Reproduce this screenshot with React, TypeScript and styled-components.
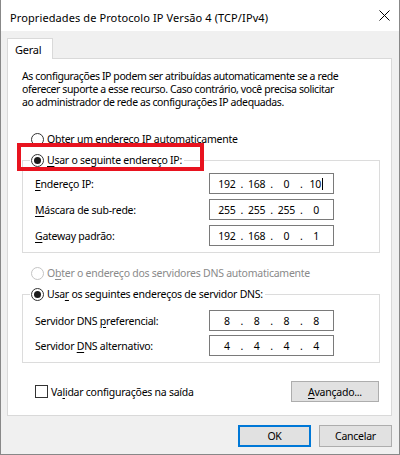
import React from 'react'
import styled, { createGlobalStyle } from 'styled-components'

const FONT = `'Noto Sans', 'Segoe UI', 'Liberation Sans', sans-serif`

const GlobalStyle = createGlobalStyle`
  html, body {
    margin: 0;
    padding: 0;
    background: #ffffff;
  }
  body {
    font-family: ${FONT};
    font-size: 10.5px;
    letter-spacing: -0.25px;
    color: #000000;
  }
  * {
    box-sizing: border-box;
  }
`

type IpProps = {
  parts: string[]
  caret?: boolean
}

const IpBox: React.FC<IpProps> = ({ parts, caret }) => (
  <IpInput>
    {parts.map((part, i) => (
      <React.Fragment key={i}>
        {i > 0 && <Dot>.</Dot>}
        <IpField>
          {part}
          {caret && i === parts.length - 1 && <Caret />}
        </IpField>
      </React.Fragment>
    ))}
  </IpInput>
)

type RadioProps = {
  checked?: boolean
  disabled?: boolean
  children: React.ReactNode
}

const Radio: React.FC<RadioProps> = ({ checked, disabled, children }) => (
  <OptionRow $disabled={disabled}>
    <RadioCircle $disabled={disabled}>{checked && <RadioDot />}</RadioCircle>
    <span>{children}</span>
  </OptionRow>
)

export default function App() {
  return (
    <>
      <GlobalStyle />
      <Window>
        <TitleBar>
          <Title>Propriedades de Protocolo IP Versão 4 (TCP/IPv4)</Title>
          <svg width="11" height="11" viewBox="0 0 11 11">
            <path d="M0.5 0.5 L10.5 10.5 M10.5 0.5 L0.5 10.5" stroke="#000" strokeWidth="1" />
          </svg>
        </TitleBar>

        <Body>
          <TabStrip>
            <Tab>Geral</Tab>
          </TabStrip>

          <Panel>
            <Description>
              As configurações IP podem ser atribuídas automaticamente se a rede
              <br />
              oferecer suporte a esse recurso. Caso contrário, você precisa solicitar
              <br />
              ao administrador de rede as configurações IP adequadas.
            </Description>

            <FirstOption>
              <Radio>
                <Key>O</Key>bter um endereço IP automaticamente
              </Radio>
            </FirstOption>

            <Group $top={5}>
              <Legend>
                <Radio checked>
                  <Key>U</Key>sar o seguinte endereço IP:
                </Radio>
                <Highlight />
              </Legend>
              <Rows $first={5} $gap={5} $bottom={6}>
                <FieldRow>
                  <FieldLabel>
                    <Key>E</Key>ndereço IP:
                  </FieldLabel>
                  <IpBox parts={['192', '168', '0', '10']} caret />
                </FieldRow>
                <FieldRow>
                  <FieldLabel>
                    <Key>M</Key>áscara de sub-rede:
                  </FieldLabel>
                  <IpBox parts={['255', '255', '255', '0']} />
                </FieldRow>
                <FieldRow>
                  <FieldLabel>
                    <Key>G</Key>ateway padrão:
                  </FieldLabel>
                  <IpBox parts={['192', '168', '0', '1']} />
                </FieldRow>
              </Rows>
            </Group>

            <DnsAuto>
              <Radio disabled>
                O<Key>b</Key>ter o endereço dos servidores DNS automaticamente
              </Radio>
            </DnsAuto>

            <Group $top={5}>
              <Legend>
                <Radio checked>
                  Usa<Key>r</Key> os seguintes endereços de servidor DNS:
                </Radio>
              </Legend>
              <Rows $first={8} $gap={4} $bottom={6}>
                <FieldRow>
                  <FieldLabel>
                    Servidor DNS <Key>p</Key>referencial:
                  </FieldLabel>
                  <IpBox parts={['8', '8', '8', '8']} />
                </FieldRow>
                <FieldRow>
                  <FieldLabel>
                    Servidor <Key>D</Key>NS alternativo:
                  </FieldLabel>
                  <IpBox parts={['4', '4', '4', '4']} />
                </FieldRow>
              </Rows>
            </Group>

            <BottomRow>
              <CheckRow>
                <CheckBox />
                <span>
                  Va<Key>l</Key>idar configurações na saída
                </span>
              </CheckRow>
              <Button $width={88}>
                <Key>A</Key>vançado...
              </Button>
            </BottomRow>
          </Panel>

          <Footer>
            <Button $width={73} $height={22} $default>
              OK
            </Button>
            <Button $width={73} $height={22}>
              Cancelar
            </Button>
          </Footer>
        </Body>
      </Window>
    </>
  )
}

const Window = styled.div`
  width: 400px;
  height: 455px;
  display: flex;
  flex-direction: column;
  background: #f0f0f0;
  border: 1px solid #888888;
  border-top: none;
`

const TitleBar = styled.div`
  height: 31px;
  flex: none;
  display: flex;
  align-items: center;
  justify-content: space-between;
  padding: 0 9px 0 9px;
  background: #ffffff;
`

const Title = styled.span`
  font-size: 11px;
  letter-spacing: 0.1px;
  padding-top: 3px;
`

const Body = styled.div`
  flex: 1;
  display: flex;
  flex-direction: column;
  padding: 7px 7px 0 6px;
`

const TabStrip = styled.div`
  display: flex;
`

const Tab = styled.div`
  position: relative;
  z-index: 1;
  width: 46px;
  height: 21px;
  margin-bottom: -1px;
  padding: 3px 0 0 7px;
  font-size: 11px;
  background: #ffffff;
  border: 1px solid #d9d9d9;
  border-bottom: none;
`

const Panel = styled.div`
  height: 358px;
  display: flex;
  flex-direction: column;
  padding: 11px 11px 0 14px;
  background: #ffffff;
  border: 1px solid #d9d9d9;
`

const Description = styled.p`
  margin: 0;
  line-height: 13px;
  letter-spacing: -0.4px;
  white-space: nowrap;
`

const OptionRow = styled.div<{ $disabled?: boolean }>`
  height: 16px;
  display: flex;
  align-items: center;
  gap: 3px;
  color: ${p => (p.$disabled ? '#8a8a8a' : '#000000')};
  white-space: nowrap;
`

const RadioCircle = styled.span<{ $disabled?: boolean }>`
  width: 13px;
  height: 13px;
  flex: none;
  display: flex;
  align-items: center;
  justify-content: center;
  border-radius: 50%;
  background: #ffffff;
  border: 1px solid ${p => (p.$disabled ? '#c4c4c4' : '#333333')};
`

const RadioDot = styled.span`
  width: 7px;
  height: 7px;
  border-radius: 50%;
  background: #1b1b1b;
`

const FirstOption = styled.div`
  margin: 22px 0 0 9px;
`

const DnsAuto = styled.div`
  margin: 12px 0 0 9px;
`

const Group = styled.fieldset<{ $top: number }>`
  width: 358px;
  min-width: 0;
  margin: ${p => p.$top}px 0 0 0;
  padding: 0;
  border: 1px solid #dcdcdc;
`

const Legend = styled.legend`
  position: relative;
  margin-left: 7px;
  padding: 0 2px 0 1px;
`

const Highlight = styled.span`
  position: absolute;
  top: -9px;
  left: -13px;
  width: 187px;
  height: 28px;
  border: 4px solid #e8131f;
  pointer-events: none;
`

const Rows = styled.div<{ $first: number; $gap: number; $bottom: number }>`
  display: flex;
  flex-direction: column;
  gap: ${p => p.$gap}px;
  padding: ${p => p.$first}px 0 ${p => p.$bottom}px 12px;
`

const FieldRow = styled.div`
  display: flex;
  align-items: center;
`

const FieldLabel = styled.span`
  width: 174px;
  white-space: nowrap;
`

const IpInput = styled.div`
  width: 125px;
  height: 21px;
  display: flex;
  align-items: center;
  padding-left: 4.5px;
  background: #ffffff;
  border: 1px solid #7a7a7a;
`

const IpField = styled.span`
  width: 25px;
  text-align: center;
  white-space: nowrap;
`

const Dot = styled.span`
  width: 4.75px;
  text-align: center;
`

const Caret = styled.span`
  display: inline-block;
  width: 1px;
  height: 12px;
  margin-left: 1px;
  vertical-align: -2px;
  background: #000000;
`

const Key = styled.span`
  text-decoration: underline;
  text-underline-offset: 2px;
`

const BottomRow = styled.div`
  display: flex;
  align-items: center;
  justify-content: space-between;
  margin: 18px 1px 0 13px;
`

const CheckRow = styled.div`
  display: flex;
  align-items: center;
  gap: 3px;
`

const CheckBox = styled.span`
  width: 13px;
  height: 13px;
  background: #ffffff;
  border: 1px solid #333333;
`

const Button = styled.button<{ $width: number; $height?: number; $default?: boolean }>`
  width: ${p => p.$width}px;
  height: ${p => p.$height ?? 21}px;
  padding: 0;
  font-family: ${FONT};
  font-size: 10.5px;
  letter-spacing: -0.25px;
  color: #000000;
  background: #e1e1e1;
  border: ${p => (p.$default ? '2px solid #0078d7' : '1px solid #adadad')};
`

const Footer = styled.div`
  display: flex;
  justify-content: flex-end;
  gap: 8px;
  padding-top: 9px;
`
